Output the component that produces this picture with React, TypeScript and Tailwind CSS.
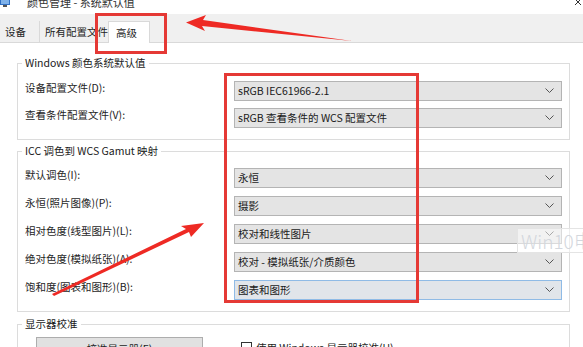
import React from "react";

const Chevron = () => (
  <svg width="9" height="6" viewBox="0 0 9 6" className="shrink-0">
    <polyline points="0.5,0.5 4.5,4.5 8.5,0.5" fill="none" stroke="#555" strokeWidth="1" />
  </svg>
);

const Select = ({ value, focused }: { value: string; focused?: boolean }) => (
  <div
    className={
      "w-[328px] h-[20px] flex items-center justify-between pl-[3px] pr-[7px] border " +
      (focused ? "border-[#8fbbe6] bg-[#e1e5ea]" : "border-[#b4b4b4] bg-[#e4e4e4]")
    }
  >
    <span className="leading-[18px] text-[#1a1a1a]">{value}</span>
    <Chevron />
  </div>
);

const Row = ({ label, value, focused }: { label: string; value: string; focused?: boolean }) => (
  <div className="flex items-center justify-between h-[20px]">
    <span className="pb-[7px] leading-[14px]">{label}</span>
    <Select value={value} focused={focused} />
  </div>
);

const Group = ({ title, children, className }: { title: string; children: React.ReactNode; className?: string }) => (
  <div className={"relative border border-[#dcdcdc] " + (className ?? "")}>
    <span className="absolute -top-[8px] left-[4px] bg-white px-[3px] leading-[14px] text-[#1a1a1a]">{title}</span>
    {children}
  </div>
);

export default function App() {
  return (
    <div
      className="relative w-[583px] h-[347px] overflow-hidden bg-white text-[10.5px] text-[#1e1e1e]"
      style={{ fontFamily: '"Noto Sans CJK SC", "Noto Sans", sans-serif' }}
    >
      {/* title bar */}
      <div className="h-[14px] flex items-start overflow-hidden relative">
        <div className="mt-[-5px] flex items-center">
          <svg width="11" height="14" viewBox="0 0 11 14">
            <rect x="0" y="2" width="10" height="8" fill="#2f6fc4" />
            <rect x="1" y="3" width="8" height="6" fill="#7fb2ea" />
            <rect x="3" y="10" width="4" height="2" fill="#555" />
          </svg>
          <span className="ml-[16px] text-[11px] leading-[14px] text-[#333]">颜色管理 - 系统默认值</span>
        </div>
        <svg className="ml-auto mr-[1px] mt-[-2px]" width="8" height="8" viewBox="0 0 8 8">
          <path d="M1 1 L7 7 M7 1 L1 7" stroke="#333" strokeWidth="1" />
        </svg>
      </div>

      {/* tab strip */}
      <div className="h-[29px] bg-[#f0f0f0] border-b border-[#d9d9d9] flex items-end">
        <div className="w-[40px] h-[21px] pl-[5px] flex items-center border-r border-[#d9d9d9]">设备</div>
        <div className="w-[68px] h-[21px] pl-[5px] flex items-center">所有配置文件</div>
        <div className="w-[42px] h-[22px] mb-[-1px] pl-[7px] flex items-center bg-white border-l border-r border-t border-[#d9d9d9]">高级</div>
      </div>

      {/* content */}
      <div className="pl-[17px] pr-[13px] pt-[20px]">
        <Group title="Windows 颜色系统默认值" className="pt-[17px] pb-[11px] pl-[7px] pr-[7px]">
          <div className="flex flex-col gap-[7px]">
            <Row label="设备配置文件(D):" value="sRGB IEC61966-2.1" />
            <Row label="查看条件配置文件(V):" value="sRGB 查看条件的 WCS 配置文件" />
          </div>
        </Group>

        <Group title="ICC 调色到 WCS Gamut 映射" className="mt-[11px] pt-[16px] pb-[11px] pl-[7px] pr-[7px]">
          <div className="flex flex-col gap-[8px]">
            <Row label="默认调色(I):" value="永恒" />
            <Row label="永恒(照片图像)(P):" value="摄影" />
            <Row label="相对色度(线型图片)(L):" value="校对和线性图片" />
            <Row label="绝对色度(模拟纸张)(A):" value="校对 - 模拟纸张/介质颜色" />
            <Row label="饱和度(图表和图形)(B):" value="图表和图形" focused />
          </div>
        </Group>

        <Group title="显示器校准" className="mt-[12px] pt-[12px] pl-[18px] h-[40px]">
          <div className="flex items-start">
            <div className="w-[167px] h-[24px] bg-[#e1e1e1] border border-[#adadad] flex items-center justify-center">校准显示器(E)</div>
            <div className="ml-[38px] mt-[3px] flex items-center gap-[4px]">
              <span className="w-[11px] h-[11px] border border-[#333] bg-white" />
              <span>使用 Windows 显示器校准(U)</span>
            </div>
          </div>
        </Group>
      </div>

      {/* watermark */}
      <div className="absolute left-[517px] top-[228px] w-[80px] h-[25px] border border-[#e4e4e4] bg-white/50 flex items-center pl-[3px] overflow-hidden">
        <span className="whitespace-nowrap text-[19px] font-light leading-[22px] text-[#d3d7dd]" style={{ fontFamily: '"Noto Sans CJK SC", sans-serif' }}>Win10电</span>
      </div>

      {/* annotation overlays */}
      <div className="absolute left-[95px] top-[13px] w-[72px] h-[41px] border-[3px] border-[#e53935]" />
      <div className="absolute left-[224px] top-[73px] w-[195px] h-[230px] border-[3px] border-[#e53935]" />

      <svg className="absolute left-0 top-0 pointer-events-none" width="583" height="347" viewBox="0 0 583 347">
        <polygon points="186,22.5 206,15 203,20 352,41 202,26 205,31" fill="#ee2a24" />
        <polygon points="204,223 181,226 186,229 52,294 54,296 189,232 191,237" fill="#ee2a24" />
      </svg>
    </div>
  );
}
